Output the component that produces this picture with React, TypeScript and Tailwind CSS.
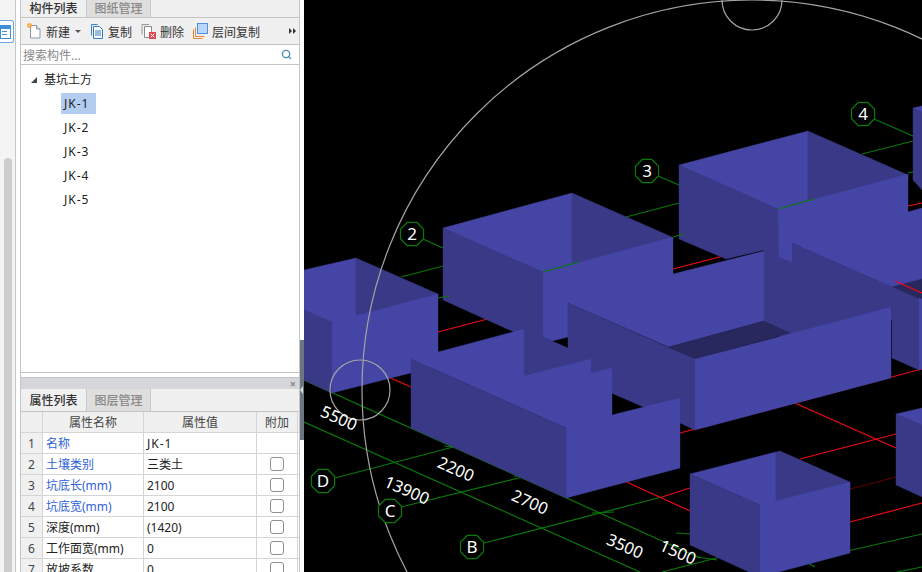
import { Search } from "lucide-react";

const LIGHT = "#4545a5";
const DARK = "#393987";
const FLOOR = "#28285e";
const GREEN = "#0a780a";
const RED = "#ee0a14";

const cjk = "font-['Noto_Sans','Noto_Sans_CJK_SC',sans-serif]";

type Poly = [string, string];

// painted back to front, page coordinates
const faces: Poly[] = [
  // left box
  [LIGHT, "304,270 356,258 356,320 332,326 304,310"],
  [DARK, "356,258 438,294 438,300 356,322"],
  [DARK, "304,310 332,322 332,393 304,380"],
  [LIGHT, "332,322 438,294 438,366 332,393"],
  // second box
  [LIGHT, "443,228 572,193 572,268 543,276"],
  [DARK, "572,193 672,237 672,245 572,270"],
  [DARK, "443,228 543,272 543,345 443,300"],
  // third box
  [LIGHT, "679,165 808,131 808,206 778,214"],
  [DARK, "808,131 908,175 908,180 808,206"],
  [DARK, "679,165 778,209 792,243 892,287 892,320 790,340 764,330 764,250 726,259 679,239"],
  // right edge box
  [DARK, "913,108 922,112 922,190 913,180"],
  [LIGHT, "913,108 922,106 922,112"],
  // back walls
  [DARK, "524,330 552,341 568,348 568,400 524,400"],
  [LIGHT, "543,272 673,237 673,274 764,251 764,321 669,347 568,303 568,337 552,341 543,337"],
  [LIGHT, "778,209 908,174 908,212 922,208 922,299 892,287 792,243 792,262 779,257"],
  [FLOOR, "669,347 764,321 790,333 695,359"],
  [FLOOR, "892,287 922,279 922,299 919,299 919,305"],
  [DARK, "892,287 919,299 919,370 892,358"],
  [LIGHT, "919,298 922,299 922,369 919,370"],
  // long wall
  [DARK, "568,303 695,359 695,430 680,423 568,374"],
  [LIGHT, "695,359 891,307 891,378 695,430"],
  // stepped box
  [LIGHT, "411,359 438,352 524,329 524,376 591,359 591,373 612,368 612,415 680,398 680,468 566,498 566,428"],
  [DARK, "411,359 566,428 566,498 411,428"],
  // lower box
  [LIGHT, "690,474 776,452 776,505 760,505"],
  [DARK, "776,452 780,451 850,482 850,490 776,510"],
  [DARK, "690,474 760,505 760,572 749,572 690,545"],
  [LIGHT, "760,505 850,482 850,553 760,577"],
  // lower right box
  [DARK, "896,414 922,425 922,497 896,485"],
  [LIGHT, "896,414 922,408 922,425"],
];

const backLines: [string, number, number, number, number][] = [
  [GREEN, 423, 239, 443, 248],
  [GREEN, 401, 277, 443, 266],
  [GREEN, 658, 176, 679, 185],
  [GREEN, 626, 217, 679, 203],
  [GREEN, 874, 119, 913, 136],
  [GREEN, 862, 154, 913, 141],
  [GREEN, 304, 380, 700, 558],
  [GREEN, 304, 422, 640, 572],
  [GREEN, 335, 478, 461, 445],
  [GREEN, 401, 507, 527, 476],
  [GREEN, 484, 543, 662, 497],
  [GREEN, 662, 572, 724, 556],
  [GREEN, 804, 561, 922, 534],
  [GREEN, 804, 561, 815, 567],
  [GREEN, 897, 572, 922, 567],
  [GREEN, 676, 533, 690, 534],
  [GREEN, 697, 557, 717, 560],
  [GREEN, 444, 446, 461, 448],
  [GREEN, 514, 476, 527, 476],
  [GREEN, 592, 513, 614, 512],
  [RED, 662, 497, 690, 488],
  [RED, 620, 479, 690, 511],
  [RED, 680, 433, 922, 369],
  [RED, 788, 400, 896, 448],
  [RED, 800, 459, 896, 434],
  [RED, 850, 522, 922, 503],
  ["#5a0000", 850, 489, 896, 477],
  [RED, 438, 332, 495, 317],
  [RED, 384, 375, 411, 387],
  [RED, 673, 269, 731, 254],
  [RED, 908, 206, 922, 203],
];

const frontLines: [string, number, number, number, number][] = [
  [GREEN, 543, 272, 579, 262],
  [GREEN, 778, 209, 814, 199],
  [GREEN, 438, 298, 449, 296],
  [GREEN, 673, 237, 684, 234],
  [GREEN, 908, 173, 913, 172],
  [RED, 895, 281, 922, 293],
];

const bubbles: [string, number, number][] = [
  ["2", 412, 234],
  ["3", 647, 171],
  ["4", 863, 114],
  ["D", 323, 481],
  ["C", 390, 511],
  ["B", 472, 547],
];

const dims: [string, number, number][] = [
  ["5500", 339, 418],
  ["2200", 456, 469],
  ["13900", 407, 490],
  ["2700", 530, 502],
  ["3500", 625, 546],
  ["1500", 678, 552],
];

const rows: { no: number; name: string; value: string; blue?: boolean; check?: boolean }[] = [
  { no: 1, name: "名称", value: "JK-1", blue: true },
  { no: 2, name: "土壤类别", value: "三类土", blue: true, check: true },
  { no: 3, name: "坑底长(mm)", value: "2100", blue: true, check: true },
  { no: 4, name: "坑底宽(mm)", value: "2100", blue: true, check: true },
  { no: 5, name: "深度(mm)", value: "(1420)", check: true },
  { no: 6, name: "工作面宽(mm)", value: "0", check: true },
  { no: 7, name: "放坡系数", value: "0", check: true },
];

function octagon(cx: number, cy: number) {
  const pts: string[] = [];
  for (let i = 0; i < 8; i++) {
    const a = (i * Math.PI) / 4 + Math.PI / 8;
    pts.push(`${cx + 12.5 * Math.cos(a)},${cy + 12.5 * Math.sin(a)}`);
  }
  return pts.join(" ");
}

function Scene() {
  return (
    <svg viewBox="304 0 618 572" className="block h-[572px] w-[618px]">
      {backLines.map(([c, x1, y1, x2, y2], i) => (
        <line key={i} x1={x1} y1={y1} x2={x2} y2={y2} stroke={c} strokeWidth="1.2" />
      ))}
      {faces.map(([c, p], i) => (
        <polygon key={i} points={p} fill={c} stroke={c} strokeWidth="0.4" />
      ))}
      {frontLines.map(([c, x1, y1, x2, y2], i) => (
        <line key={i} x1={x1} y1={y1} x2={x2} y2={y2} stroke={c} strokeWidth="1.2" />
      ))}
      <circle cx="752" cy="390" r="390" fill="none" stroke="#a4a4a4" strokeWidth="1.2" />
      <circle cx="752" cy="0" r="30" fill="none" stroke="#a4a4a4" strokeWidth="1.2" />
      <circle cx="360" cy="390" r="30" fill="none" stroke="#a4a4a4" strokeWidth="1.2" />
      {bubbles.map(([t, x, y]) => (
        <g key={t}>
          <polygon points={octagon(x, y)} fill="#000" stroke={GREEN} strokeWidth="1.2" />
          <text x={x} y={y + 6} textAnchor="middle" fill="#fff" fontSize="17" fontFamily="'Noto Sans', sans-serif">
            {t}
          </text>
        </g>
      ))}
      {dims.map(([t, x, y]) => (
        <text
          key={t}
          x={x}
          y={y + 6}
          textAnchor="middle"
          fill="#fff"
          fontSize="16.5"
          fontFamily="'Noto Sans', sans-serif"
          transform={`rotate(24 ${x} ${y})`}
        >
          {t}
        </text>
      ))}
    </svg>
  );
}

function NewIcon() {
  return (
    <svg viewBox="0 0 15 16" className="h-4 w-[15px]">
      <path d="M3.5 2.5h6l3.5 3.5v9h-9.5z" fill="#fff" stroke="#8b98a5" />
      <path d="M9.5 2.5v3.5h3.5" fill="#dfe4ea" stroke="#8b98a5" />
      <rect x="0.5" y="0.5" width="4" height="4" fill="#f59a23" />
      <rect x="1.7" y="1.7" width="1.6" height="1.6" fill="#fde2b0" />
    </svg>
  );
}

function CopyIcon() {
  return (
    <svg viewBox="0 0 14 16" className="h-4 w-[14px]">
      <path d="M1.5 12.5v-11h6" fill="none" stroke="#3b82c4" />
      <path d="M3.5 3.5h6l3 3v9h-9z" fill="#fff" stroke="#2f7cc1" />
      <path d="M5 8h6M5 10h6M5 12h6" stroke="#2f7cc1" />
    </svg>
  );
}

function DeleteIcon() {
  return (
    <svg viewBox="0 0 15 16" className="h-4 w-[15px]">
      <path d="M1 11.5v-10h7" fill="none" stroke="#9a9a9a" />
      <path d="M3.5 3.5h7v11h-7z" fill="#fff" stroke="#8a8a8a" />
      <rect x="8" y="9" width="7" height="7" fill="#e0484f" />
      <path d="M9.7 10.7l3.6 3.6M13.3 10.7l-3.6 3.6" stroke="#fff" />
    </svg>
  );
}

function FloorCopyIcon() {
  return (
    <svg viewBox="0 0 15 16" className="h-4 w-[15px]">
      <path d="M0.5 15.5v-9M0.5 15.5h9" stroke="#e8833a" fill="none" />
      <path d="M2.5 13.5v-9M2.5 13.5h9" stroke="#e8833a" fill="none" />
      <rect x="4.5" y="0.5" width="10" height="10" fill="#b9d6fb" stroke="#4f8fdc" />
    </svg>
  );
}

function Tool({ icon, label }: { icon: React.ReactNode; label: string }) {
  return (
    <div className="flex items-center gap-[4px]">
      {icon}
      <span className="pt-[4px] text-[12px] leading-none text-[#333]">{label}</span>
    </div>
  );
}

function Tab({ label, active, low }: { label: string; active?: boolean; low?: boolean }) {
  return active ? (
    <div className={`flex w-[65px] items-center justify-center bg-[#f0f0f0] text-[12px] font-medium text-[#333] ${low ? "pt-[2px]" : ""}`}>{label}</div>
  ) : (
    <div className={`flex w-[65px] items-center justify-center border-x border-[#c8c8c8] bg-[#dedede] text-[12px] font-medium text-[#8a8a8a] ${low ? "pt-[2px]" : ""}`}>{label}</div>
  );
}

function SidePanel() {
  return (
    <div className={`flex h-full w-[280px] shrink-0 flex-col overflow-hidden border-x border-[#c4c4c4] bg-white ${cjk}`}>
      <div className="flex h-[18px] shrink-0 border-b border-[#c4c4c4] bg-[#f0f0f0]">
        <Tab label="构件列表" active />
        <Tab label="图纸管理" />
      </div>
      <div className="flex h-[27px] shrink-0 items-center border-b border-[#c4c4c4] bg-[#f0f0f0] pl-[6px]">
        <Tool icon={<NewIcon />} label="新建" />
        <div className="ml-[5px] mr-[9px] h-0 w-0 border-x-[3px] border-t-[3px] border-x-transparent border-t-[#555]" />
        <Tool icon={<CopyIcon />} label="复制" />
        <div className="w-[9px]" />
        <Tool icon={<DeleteIcon />} label="删除" />
        <div className="w-[9px]" />
        <Tool icon={<FloorCopyIcon />} label="层间复制" />
        <div className="ml-auto mr-[3px] flex gap-[1px]">
          <div className="h-0 w-0 border-y-[3px] border-l-[3px] border-y-transparent border-l-[#333]" />
          <div className="h-0 w-0 border-y-[3px] border-l-[3px] border-y-transparent border-l-[#333]" />
        </div>
      </div>
      <div className="flex h-[20px] shrink-0 items-center justify-between border-b border-[#c4c4c4] pl-[2px] pr-[7px]">
        <span className="pt-[2px] text-[12px] text-[#888]">搜索构件...</span>
        <Search className="h-[11px] w-[11px] text-[#4a90b8]" strokeWidth={3} />
      </div>
      <div className="h-[308px] shrink-0 border-b border-[#c4c4c4] text-[12px] text-[#222]">
        <div className="flex h-[28px] items-center pl-[10px] pt-[2px]">
          <div className="h-0 w-0 border-b-[6px] border-l-[6px] border-b-[#444] border-l-transparent" />
          <span className="ml-[7px]">基坑土方</span>
        </div>
        <div className="flex flex-col gap-[3px] pl-[40px]">
          {["JK-1", "JK-2", "JK-3", "JK-4", "JK-5"].map((name, i) => (
            <div key={name} className={`flex h-[21px] w-[35px] items-center pl-[3px] tracking-[1px] ${i === 0 ? "bg-[#b3cdf0]" : ""}`}>
              {name}
            </div>
          ))}
        </div>
      </div>
      <div className="h-[4px] shrink-0 bg-white" />
      <div className="flex h-[12px] shrink-0 items-center justify-end border-t border-[#c4c4c4] bg-[#d4d6d9] pr-[3px] text-[11px] font-bold leading-none text-[#888]">
        ×
      </div>
      <div className="flex h-[23px] shrink-0 border-b border-[#c4c4c4] bg-[#f0f0f0]">
        <Tab label="属性列表" active low />
        <Tab label="图层管理" low />
      </div>
      <div className="flex h-[21px] shrink-0 border-b border-[#d5d5d5] bg-[#f0f0f0] text-center text-[12px] text-[#444]">
        <div className="w-[22px] border-r border-[#d5d5d5]" />
        <div className="flex w-[101px] items-center justify-center border-r border-[#d5d5d5] pt-[2px]">属性名称</div>
        <div className="flex w-[113px] items-center justify-center border-r border-[#d5d5d5] pt-[2px]">属性值</div>
        <div className="flex w-[41px] items-center justify-center border-r border-[#d5d5d5] pt-[2px]">附加</div>
      </div>
      {rows.map((r) => (
        <div key={r.no} className="flex h-[21px] shrink-0 border-b border-[#d5d5d5] text-[12px] text-[#222]">
          <div className="flex w-[22px] items-center justify-center border-r border-[#d5d5d5] bg-[#f0f0f0] pt-[2px] text-[#444]">{r.no}</div>
          <div className={`flex w-[101px] items-center border-r border-[#d5d5d5] pl-[3px] pt-[2px] ${r.blue ? "text-[#2f62d8]" : ""}`}>{r.name}</div>
          <div className={`flex w-[113px] items-center border-r border-[#d5d5d5] pl-[3px] pt-[2px] ${r.no === 1 ? "tracking-[1px]" : ""}`}>{r.value}</div>
          <div className="flex w-[41px] items-center justify-center border-r border-[#d5d5d5]">
            {r.check && <div className="h-[14px] w-[14px] rounded-[3px] border border-[#8f8f8f] bg-white" />}
          </div>
        </div>
      ))}
    </div>
  );
}

export default function App() {
  return (
    <div className="flex h-[572px] w-[922px] overflow-hidden bg-white">
      <div className="flex w-[20px] shrink-0">
        <div className="flex w-[16px] flex-col border-r border-[#c8c8c8] bg-[#f4f4f4]">
          <div className="mt-[20px] flex h-[23px] w-[14px] shrink-0 items-center rounded-r-[3px] border border-l-0 border-[#6aa8e8] bg-white">
            <svg viewBox="0 0 12 14" className="h-[14px] w-[12px]">
              <rect x="0" y="0" width="11" height="14" fill="#3f8fd8" />
              <rect x="1" y="4" width="9" height="9" fill="#fff" />
              <rect x="2" y="6" width="5" height="1" fill="#3f8fd8" />
              <rect x="2" y="9" width="5" height="1" fill="#3f8fd8" />
            </svg>
          </div>
          <div className="ml-[4px] mt-[115px] w-[8px] flex-1 rounded-t-[4px] bg-[#cdcdcd]" />
        </div>
      </div>
      <SidePanel />
      <div className="flex w-[4px] shrink-0 flex-col bg-white">
        <div className="relative mt-[340px] flex h-[100px] items-center bg-[#6b7680]">
          <div className="h-0 w-0 border-y-[4px] border-r-[3px] border-y-transparent border-r-[#d8dce0]" />
        </div>
      </div>
      <div className="flex-1 bg-black">
        <Scene />
      </div>
    </div>
  );
}
